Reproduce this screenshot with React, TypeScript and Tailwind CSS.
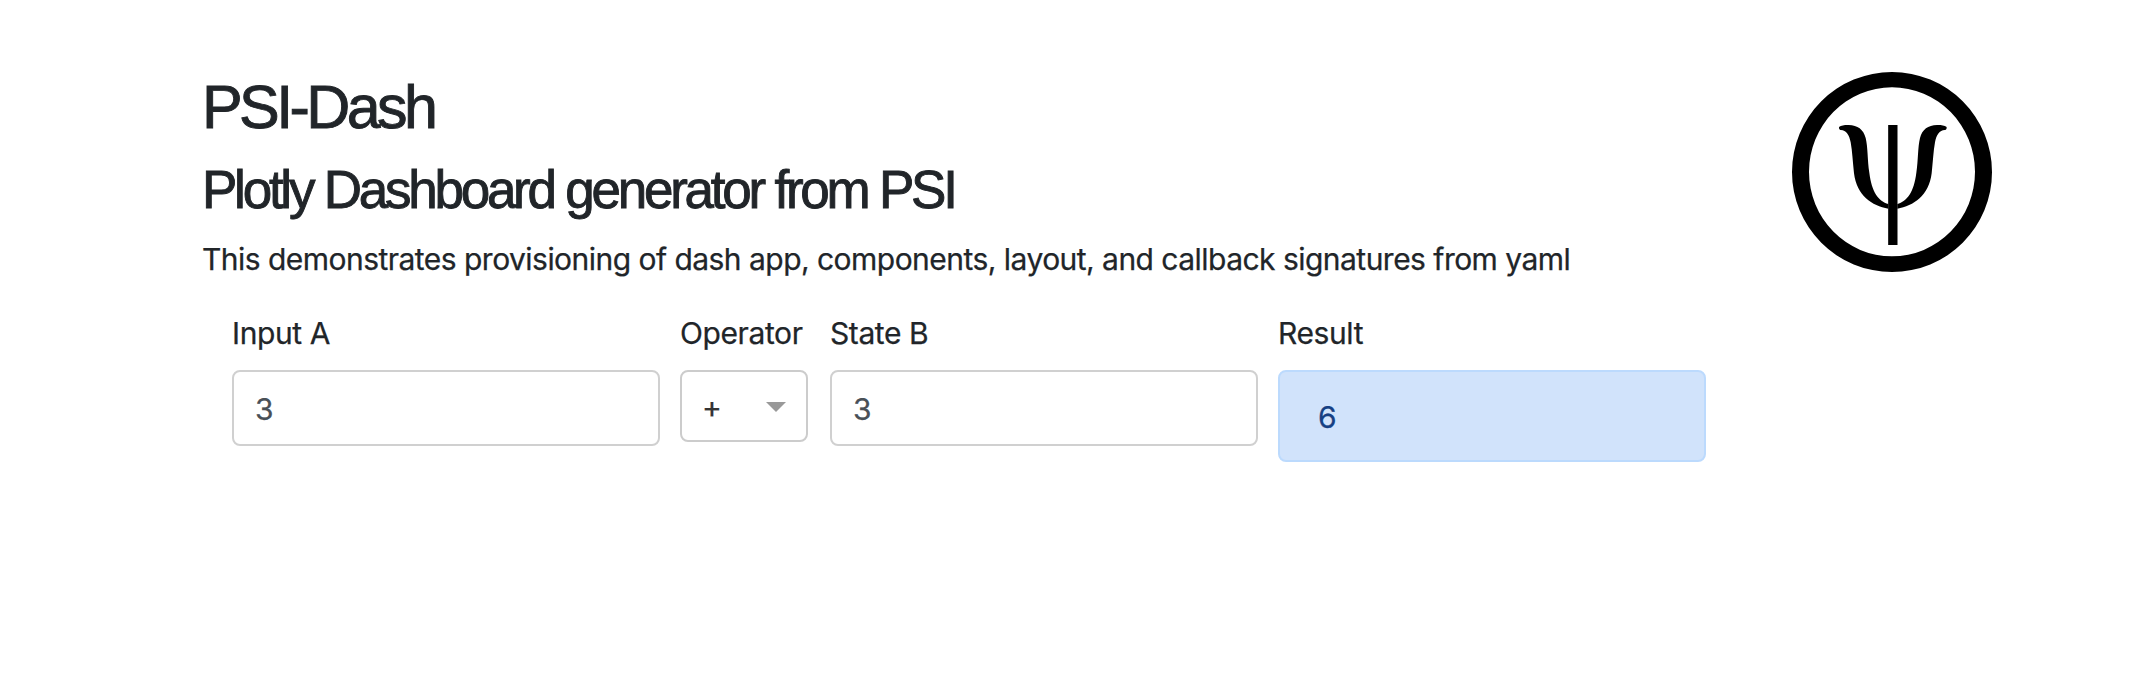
import type { ReactNode } from "react";

const ARM =
  "M177 201 C184 196 196 194.5 206 195 C233 196 250 208 257 234 C264 262 262 300 268 338 C275 396 296 424 325 432 L325 446 C276 438 230 406 222 340 C218 304 217 274 212 247 C208 224 198 209 181 210 Q176 208 177 201Z";

function PsiLogo() {
  return (
    <svg viewBox="36 36 600 600" className="size-[200px] shrink-0" aria-label="Psi">
      <path
        fillRule="evenodd"
        d="M336 36a300 300 0 1 0 0 600a300 300 0 1 0 0-600Z M336 82a249 253.500 0 1 1 0 507a249 253.500 0 1 1 0-507Z"
      />
      <path d={ARM} />
      <path d={ARM} transform="translate(677 0) scale(-1 1)" />
      <rect x="324.500" y="195" width="28" height="360" />
    </svg>
  );
}

function Field({ label, className, children }: { label: string; className: string; children: ReactNode }) {
  return (
    <div className={`flex flex-col gap-[14px] ${className}`}>
      <label className="leading-[45px] tracking-[-0.4px] whitespace-nowrap">{label}</label>
      {children}
    </div>
  );
}

function NumberBox({ value }: { value: string }) {
  return (
    <div className="h-[76px] rounded-lg border-2 border-[#d0d0d0] bg-white px-[21px] pt-[15px] leading-[45px] text-[#495057]">
      {value}
    </div>
  );
}

export default function App() {
  return (
    <main
      className="flex h-[694px] items-start justify-between bg-white pr-[156px] pl-[202px] text-[30px] tracking-[-0.53px] text-[#212529] [-webkit-text-stroke:0.25px]"
      style={{ fontFamily: 'Inter, "Liberation Sans", sans-serif' }}
    >
      <section className="pt-[71px]">
        <h1 className="font-['Liberation_Sans'] text-[61px] leading-[72px] tracking-[-3.6px] [-webkit-text-stroke:0.9px]">
          PSI-Dash
        </h1>
        <h2 className="mt-[15px] font-['Liberation_Sans'] text-[53px] leading-[63px] tracking-[-3.24px] [-webkit-text-stroke:0.9px]">
          Plotly Dashboard generator from PSI
        </h2>
        <p className="mt-4 leading-[45px] whitespace-nowrap">
          This demonstrates provisioning of dash app, components, layout, and callback signatures from yaml
        </p>
        <div className="mt-[29px] ml-[30px] flex items-start">
          <Field label="Input A" className="w-[428px]">
            <NumberBox value="3" />
          </Field>
          <Field label="Operator" className="ml-5 w-[128px]">
            <div className="flex h-[72px] items-center justify-between rounded-lg border-2 border-[#ccc] bg-white pr-5 pl-5 text-[#333]">
              <span className="pt-[3px] leading-[45px]">+</span>
              <svg viewBox="0 0 20 10" className="mt-0.5 h-[10px] w-5 fill-[#999]">
                <path d="M0 0H20L10 10Z" />
              </svg>
            </div>
          </Field>
          <Field label="State B" className="ml-[22px] w-[428px]">
            <NumberBox value="3" />
          </Field>
          <Field label="Result" className="ml-5 w-[428px]">
            <div className="h-[92px] rounded-lg border-2 border-[#bcdafd] bg-[#d1e3fb] px-[38px] pt-[23px] leading-[45px] text-[#164083]">
              6
            </div>
          </Field>
        </div>
      </section>
      <div className="pt-[72px]">
        <PsiLogo />
      </div>
    </main>
  );
}
